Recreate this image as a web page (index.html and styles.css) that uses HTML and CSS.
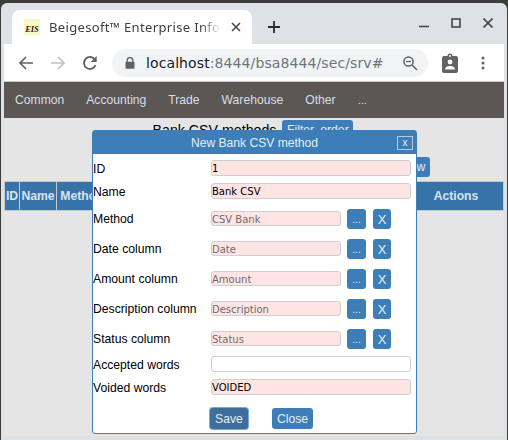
FILE: index.html
```html
<!DOCTYPE html>
<html lang="en">
<head>
    <meta charset="UTF-8">
    <title>Beigesoft Enterprise Information System</title>
    <link rel="stylesheet" href="styles.css">
</head>
<body>
<div class="browser">
    <div class="tabstrip">
        <div class="tab">
            <span class="favicon"><span>EIS</span></span>
            <span class="tab-title">Beigesoft™ Enterprise Info</span>
            <svg class="tab-close" width="10" height="10" viewBox="0 0 10 10"><path d="M1 1l8 8M9 1l-8 8" stroke="#45494d" stroke-width="1.6"/></svg>
        </div>
        <svg class="new-tab" width="14" height="14" viewBox="0 0 14 14"><path d="M7 1v12M1 7h12" stroke="#2a2d30" stroke-width="1.8"/></svg>
        <div class="win-controls">
            <svg width="10" height="10" viewBox="0 0 10 10"><path d="M0 8.5h10" stroke="#45494d" stroke-width="1.6"/></svg>
            <svg width="10" height="10" viewBox="0 0 10 10"><rect x="1" y="1" width="8" height="8" fill="none" stroke="#45494d" stroke-width="1.6"/></svg>
            <svg width="10" height="10" viewBox="0 0 10 10"><path d="M.5.5l9 9M9.5.5l-9 9" stroke="#45494d" stroke-width="1.6"/></svg>
        </div>
    </div>
    <div class="toolbar">
        <svg class="nav-icon" width="16" height="16" viewBox="0 0 16 16"><path d="M15 8H2M8 2L2 8l6 6" fill="none" stroke="#5f6368" stroke-width="1.7"/></svg>
        <svg class="nav-icon" width="16" height="16" viewBox="0 0 16 16"><path d="M1 8h13M8 2l6 6-6 6" fill="none" stroke="#bdc1c6" stroke-width="1.7"/></svg>
        <svg class="nav-icon" width="16" height="16" viewBox="0 0 16 16"><path d="M13.6 10.2A6 6 0 1 1 13 4.6" fill="none" stroke="#5f6368" stroke-width="1.8"/><path d="M14.7 1v6h-6z" fill="#5f6368"/></svg>
        <div class="omnibox">
            <svg class="lock" width="10" height="12" viewBox="0 0 10 12"><path d="M2.2 5V3.4a2.8 2.8 0 0 1 5.6 0V5" fill="none" stroke="#5f6368" stroke-width="1.3"/><rect x="0.5" y="4.8" width="9" height="7" rx="1" fill="#5f6368"/></svg>
            <span class="url"><span class="url-host">localhost</span>:8444/bsa8444/sec/srv#</span>
            <svg class="zoom-out" width="16" height="16" viewBox="0 0 16 16"><circle cx="6.5" cy="6.5" r="4.6" fill="none" stroke="#5f6368" stroke-width="1.5"/><path d="M10 10l5 5" stroke="#5f6368" stroke-width="1.6"/><path d="M4 6.5h5" stroke="#5f6368" stroke-width="1.3"/></svg>
        </div>
        <svg class="profile" width="16" height="20" viewBox="0 0 16 20"><path d="M2 3h3.5a2.5 2.5 0 0 1 5 0H14a2 2 0 0 1 2 2v13a2 2 0 0 1-2 2H2a2 2 0 0 1-2-2V5a2 2 0 0 1 2-2z" fill="#5f6368"/><circle cx="8" cy="3" r="1" fill="#fff"/><circle cx="8" cy="9" r="2.4" fill="#fff"/><path d="M3 16.5c0-2.5 2.5-3.5 5-3.5s5 1 5 3.5z" fill="#fff"/></svg>
        <svg class="dots" width="4" height="14" viewBox="0 0 4 14"><circle cx="2" cy="2" r="1.5" fill="#5f6368"/><circle cx="2" cy="7" r="1.5" fill="#5f6368"/><circle cx="2" cy="12" r="1.5" fill="#5f6368"/></svg>
    </div>
    <div class="page">
        <nav class="menu">
            <a>Common</a>
            <a>Accounting</a>
            <a>Trade</a>
            <a>Warehouse</a>
            <a>Other</a>
            <a class="more">...</a>
        </nav>
        <div class="title-row">
            <span>Bank CSV methods</span>
            <button class="btn">Filter, order</button>
        </div>
        <div class="new-row">
            <button class="btn">New</button>
        </div>
        <table class="list">
            <tr>
                <th class="col-id">ID</th>
                <th class="col-name">Name</th>
                <th class="col-method">Method</th>
                <th></th>
                <th class="col-actions">Actions</th>
            </tr>
        </table>
        <form class="dialog">
            <div class="dialog-head">
                <span>New Bank CSV method</span>
                <button type="button" class="dialog-x">x</button>
            </div>
            <div class="field f-tight">
                <label>ID</label>
                <input class="req wide" value="1">
            </div>
            <div class="field f-tight">
                <label>Name</label>
                <input class="req wide" value="Bank CSV">
            </div>
            <div class="pick-group">
                <div class="field f-pick">
                    <label>Method</label>
                    <input class="req picked" value="CSV Bank" disabled>
                    <button type="button" class="btn pick">...</button>
                    <button type="button" class="btn clear">X</button>
                </div>
                <div class="field f-pick">
                    <label>Date column</label>
                    <input class="req picked" value="Date" disabled>
                    <button type="button" class="btn pick">...</button>
                    <button type="button" class="btn clear">X</button>
                </div>
                <div class="field f-pick">
                    <label>Amount column</label>
                    <input class="req picked" value="Amount" disabled>
                    <button type="button" class="btn pick">...</button>
                    <button type="button" class="btn clear">X</button>
                </div>
                <div class="field f-pick">
                    <label>Description column</label>
                    <input class="req picked" value="Description" disabled>
                    <button type="button" class="btn pick">...</button>
                    <button type="button" class="btn clear">X</button>
                </div>
                <div class="field f-pick">
                    <label>Status column</label>
                    <input class="req picked" value="Status" disabled>
                    <button type="button" class="btn pick">...</button>
                    <button type="button" class="btn clear">X</button>
                </div>
            </div>
            <div class="field f-tight">
                <label>Accepted words</label>
                <input class="wide">
            </div>
            <div class="field f-tight">
                <label>Voided words</label>
                <input class="req wide" value="VOIDED">
            </div>
            <div class="dialog-foot">
                <button type="button" class="btn save">Save</button>
                <button type="button" class="btn close">Close</button>
            </div>
        </form>
    </div>
</div>
</body>
</html>
```

FILE: styles.css
```css
html, body {
    margin: 0;
    height: 100%;
    overflow: hidden;
}

body {
    background-color: #3c3c3c;
    font-family: "Liberation Sans", Arial, sans-serif;
}

.browser {
    width: 506px;
    height: 437px;
    margin: 3px 1px 0;
    padding: 0 3px 4px;
    box-sizing: border-box;
    display: flex;
    flex-direction: column;
    background-color: #dee1e6;
    border-radius: 6px 6px 0 0;
}

.tabstrip {
    height: 41px;
    flex: none;
    display: flex;
    align-items: center;
    padding-top: 7px;
    box-sizing: border-box;
}

.tab {
    width: 240px;
    height: 34px;
    margin-left: 8px;
    background-color: #fff;
    border-radius: 8px 8px 0 0;
    display: flex;
    align-items: center;
    align-self: flex-end;
    box-sizing: border-box;
    padding-left: 12px;
}

.favicon {
    width: 16px;
    height: 16px;
    background-color: #fbf7c4;
    display: flex;
    align-items: flex-end;
    justify-content: center;
    flex: none;
}

.favicon span {
    font: italic bold 8.5px "Liberation Serif", serif;
    color: #222;
    line-height: 12px;
}

.tab-title {
    width: 172px;
    margin-left: 9px;
    font: 13px "Noto Sans", sans-serif;
    color: #3c4043;
    white-space: nowrap;
    overflow: hidden;
    letter-spacing: 0.35px;
    -webkit-mask-image: linear-gradient(to right, #000 88%, transparent);
    mask-image: linear-gradient(to right, #000 88%, transparent);
}

.tab-close {
    margin-left: 10px;
}

.new-tab {
    margin-left: 15px;
}

.win-controls {
    margin-left: auto;
    margin-right: 11px;
    margin-top: 8px;
    align-self: flex-start;
    display: flex;
    gap: 22px;
}

.toolbar {
    height: 38px;
    flex: none;
    background-color: #fff;
    border-bottom: 1px solid #c8c8c8;
    box-sizing: border-box;
    display: flex;
    align-items: center;
    padding-left: 14px;
    gap: 16px;
}

.nav-icon {
    flex: none;
}

.omnibox {
    width: 316px;
    height: 28px;
    margin-left: -2px;
    background-color: #f1f3f4;
    border-radius: 14px;
    display: flex;
    align-items: center;
    box-sizing: border-box;
    padding-left: 13px;
    flex: none;
}

.url {
    margin-left: 11px;
    font: 14px "DejaVu Sans", sans-serif;
    color: #70757a;
    white-space: nowrap;
    letter-spacing: 0.1px;
}

.url-host {
    color: #202124;
}

.zoom-out {
    margin-left: auto;
    margin-right: 10px;
}

.profile {
    margin-left: -2px;
}

.dots {
    margin-left: 7px;
}

.page {
    flex: 1;
    position: relative;
    background-color: #e5e5e5;
    color: #000;
}

.menu {
    height: 36px;
    background-color: #5c5654;
    display: flex;
    align-items: center;
    padding-left: 11px;
    gap: 22px;
}

.menu a {
    font-size: 12.15px;
    color: #d5dfe8;
}

.menu .more {
    font-size: 11px;
}

.title-row {
    height: 18px;
    margin-top: 2px;
    padding-right: 2px;
    display: flex;
    justify-content: center;
    align-items: flex-end;
    gap: 6px;
    font-size: 14.2px;
}

.btn {
    background-color: #3d7eb9;
    color: #e4eef8;
    border: none;
    border-radius: 3px;
    padding: 0;
    font-family: "Liberation Sans", Arial, sans-serif;
    font-size: 12.2px;
}

.title-row .btn {
    width: 71px;
    height: 19px;
    align-self: flex-start;
}

.new-row {
    height: 24px;
    margin-top: 19px;
    display: flex;
    justify-content: flex-end;
    padding-right: 74px;
}

.new-row .btn {
    width: 34px;
    height: 20px;
}

.list {
    width: 500px;
    border-collapse: collapse;
}

.list th {
    height: 28px;
    padding: 0;
    background-color: #3773a8;
    border: 1px solid #c9c9c9;
    color: #d8e4ef;
    font-size: 12.2px;
}

.col-id { width: 14px; }
.col-name { width: 36px; }
.col-method { width: 50px; }
.col-actions { width: 94px; }

.dialog {
    position: absolute;
    left: 88px;
    top: 48px;
    width: 325px;
    height: 304px;
    box-sizing: border-box;
    background-color: #fff;
    border: 1px solid #3d7eb9;
    border-radius: 3px;
    margin: 0;
}

.dialog-head {
    height: 23px;
    background-color: #3d7eb9;
    color: #e4eef8;
    font-size: 12.1px;
    display: flex;
    align-items: center;
    justify-content: center;
    position: relative;
    margin-bottom: 2px;
}

.dialog-x {
    position: absolute;
    right: 3px;
    top: 5px;
    width: 16px;
    height: 14px;
    padding: 0;
    background: none;
    border: 1px solid #b5cde4;
    color: #e4eef8;
    font-size: 10px;
    line-height: 10px;
}

.field {
    display: flex;
    align-items: center;
    font-size: 12.2px;
}

.f-tight {
    height: 23px;
    box-sizing: border-box;
    padding-top: 4px;
    align-items: flex-start;
}

.f-tight label {
    line-height: 18px;
}

.pick-group {
    margin: 2px 0 -2px;
}

.f-pick {
    height: 30px;
}

.field label {
    width: 118px;
    flex: none;
}

.field input {
    height: 16px;
    box-sizing: border-box;
    padding: 0;
    border: 1px solid #cfcfcf;
    border-radius: 3px;
    background-color: #fff;
    font: 10px "DejaVu Sans", sans-serif;
    color: #000;
    outline: none;
}

.field .req {
    background-color: #ffe4e4;
}

.wide {
    width: 200px;
}

.field .picked {
    width: 130px;
    height: 15px;
    margin-top: -1px;
    padding-top: 2px;
    color: #6d6d6d;
}

.pick {
    width: 19px;
    height: 20px;
    margin-left: 6px;
    font-size: 10px;
}

.clear {
    width: 18px;
    height: 20px;
    margin-left: 7px;
    font-size: 13px;
}

.dialog-foot {
    display: flex;
    margin-left: 117px;
    margin-top: 10px;
    gap: 24px;
}

.save {
    width: 38px;
    height: 21px;
    background-color: #3f6e9a;
    box-shadow: 0 0 0 1px #7aa9e0;
}

.close {
    width: 41px;
    height: 21px;
}
```
